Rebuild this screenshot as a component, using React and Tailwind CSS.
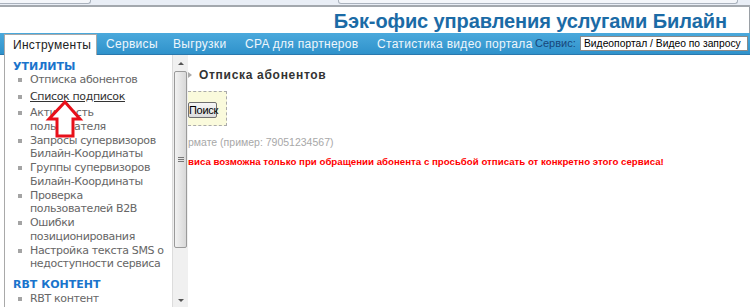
import React from 'react';

const menu = [
  { lines: ['Отписка абонентов'], box: 'h-[17px]', color: 'text-[#666]' },
  { lines: ['Список подписок'], box: 'h-[16px]', color: 'text-[#333] underline' },
  { lines: ['Активность', 'пользователя'], box: 'h-[27.5px]', color: 'text-[#666]' },
  { lines: ['Запросы супервизоров', 'Билайн-Координаты'], box: 'h-[27.5px]', color: 'text-[#666]' },
  { lines: ['Группы супервизоров', 'Билайн-Координаты'], box: 'h-[27.5px]', color: 'text-[#666]' },
  { lines: ['Проверка', 'пользователей B2B'], box: 'h-[27.5px]', color: 'text-[#666]' },
  { lines: ['Ошибки', 'позиционирования'], box: 'h-[27.5px]', color: 'text-[#666]' },
  { lines: ['Настройка текста SMS о', 'недоступности сервиса'], box: 'h-[27.5px]', color: 'text-[#666]' },
];

const MenuItem = ({ item }) => (
  <div className={`flex ${item.box}`}>
    <div className="w-[13px] shrink-0" />
    <div className="w-[4px] h-[4px] bg-[#a4a4a4] mt-[5px] shrink-0" />
    <div className="w-[8px] shrink-0" />
    <div className={`leading-[13.75px] whitespace-nowrap tracking-[-0.35px] ${item.color}`}>
      {item.lines.map((l, i) => (
        <div key={i}>{l}</div>
      ))}
    </div>
  </div>
);

const Scrollbar = () => (
  <div className="w-[16px] shrink-0 h-full bg-[#f0f0f0] border-l border-[#dcdcdc] flex flex-col items-center">
    <div className="h-[16px] flex items-center justify-center">
      <div className="w-0 h-0 border-l-[3px] border-r-[3px] border-b-[3px] border-l-transparent border-r-transparent border-b-[#555]" />
    </div>
    <div className="w-[13px] h-[177px] rounded-[2px] border border-[#9a9a9a] bg-gradient-to-r from-[#f2f2f2] to-[#d8d8d8] flex flex-col items-center justify-center gap-[1px]">
      <div className="w-[6px] h-px bg-[#777]" />
      <div className="w-[6px] h-px bg-[#777]" />
      <div className="w-[6px] h-px bg-[#777]" />
    </div>
    <div className="flex-1" />
    <div className="h-[14px] flex items-center justify-center">
      <div className="w-0 h-0 border-l-[3px] border-r-[3px] border-t-[3px] border-l-transparent border-r-transparent border-t-[#555]" />
    </div>
  </div>
);

export default function App() {
  return (
    <div className="w-[750px] h-[307px] overflow-hidden bg-white relative font-['Liberation_Sans',Arial,sans-serif]">
      {/* browser chrome strip */}
      <div className="h-[7px] bg-[#e9eef6] border-b-2 border-[#a3a8ae] flex">
        <div className="w-[91px] h-[4px] bg-[#f4f6fa] border-b border-r border-[#aab2bd] rounded-br-[3px]" />
        <div className="w-[247px]" />
        <div className="w-[400px] h-[4px] bg-[#f4f6fa] border-b border-l border-r border-[#aab2bd] rounded-b-[3px]" />
        <div className="flex-1" />
      </div>

      {/* title */}
      <div className="h-[26px] flex justify-end pr-[22px] border-r border-[#9aa0a6]">
        <div className="text-[20px] font-bold leading-[26px] text-[#1b6ba6] pt-[1px] tracking-[-0.1px]">
          Бэк-офис управления услугами Билайн
        </div>
      </div>

      {/* nav */}
      <div className="h-[22px] bg-gradient-to-b from-[#4aa9dc] to-[#2f92cb] border-b border-[#2a78ad] flex items-end text-[12px] whitespace-nowrap">
        <div className="ml-[4px] w-[93px] h-[21px] -mb-[1px] bg-white border border-b-0 border-[#a9a9a9] text-[#222] leading-[20px] pl-[8px] relative z-10 tracking-[0.3px]">
          Инструменты
        </div>
        <div className="self-center flex items-center text-[#eef6fc] ml-[9px] tracking-[0.3px]">
          <span className="w-[67px]">Сервисы</span>
          <span className="w-[72px]">Выгрузки</span>
          <span className="w-[132px]">CPA для партнеров</span>
          <span className="w-[158px]">Статистика видео портала</span>
        </div>
        <div className="self-center w-[45px] text-[#17467a] text-[11px]">Сервис:</div>
        <div className="self-center w-[168px] h-[15px] overflow-hidden bg-white border border-[#8a8a8a] text-black leading-[13px] pl-[3px] text-[10.3px]">
          Видеопортал / Видео по запросу
        </div>
      </div>

      {/* body */}
      <div className="flex h-[252px]">
        <div className="ml-[4px] w-[168px] border-l border-[#a9a9a9] shrink-0 overflow-hidden font-['DejaVu_Sans',Verdana,sans-serif] text-[11px] pt-[5px]">
          <div className="h-[13px] leading-[14px] pl-[8px] font-bold text-[#1a74cc]">УТИЛИТЫ</div>
          {menu.map((m, i) => (
            <MenuItem key={i} item={m} />
          ))}
          <div className="h-[7px]" />
          <div className="h-[14px] leading-[14px] pl-[8px] font-bold text-[#1a74cc]">RBT КОНТЕНТ</div>
          <MenuItem item={{ lines: ['RBT контент'], box: 'h-[14px]', color: 'text-[#666]' }} />
        </div>

        <Scrollbar />

        <div className="flex-1 overflow-hidden">
          <div className="flex items-center h-[14px] mt-[13px]">
            <div className="w-0 h-0 border-t-[3px] border-b-[3px] border-l-[4px] border-t-transparent border-b-transparent border-l-[#aaa]" />
            <div className="ml-[7px] text-[12px] font-bold tracking-[0.7px] text-[#333]">Отписка абонентов</div>
          </div>
          <div className="mt-[9px] w-[39px] h-[35px] bg-[#fafadc] border border-l-0 border-dashed border-[#aaa] pt-[10px]">
            <div className="w-[29px] h-[16px] border border-[#707070] rounded-[2px] bg-gradient-to-b from-[#f6f6f6] to-[#dcdcdc] text-[11px] leading-[14px] text-black tracking-[-0.3px]">
              Поиск
            </div>
          </div>
          <div className="mt-[9px] text-[10.5px] leading-[14px] text-[#a8a8a8] whitespace-nowrap">рмате (пример: 79051234567)</div>
          <div className="mt-[6px] text-[9.7px] leading-[14px] font-bold text-[#ff0000] whitespace-nowrap">
            виса возможна только при обращении абонента с просьбой отписать от конкретно этого сервиса!
          </div>
        </div>
      </div>

      {/* red pointer arrow */}
      <svg className="absolute left-0 top-0" width="100" height="150" viewBox="0 0 100 150">
        <polygon
          points="65,102 80,119 73,119 73,136 57,136 57,119 49,119"
          fill="white"
          stroke="#e8101a"
          strokeWidth="3"
          strokeLinejoin="miter"
        />
      </svg>
    </div>
  );
}
